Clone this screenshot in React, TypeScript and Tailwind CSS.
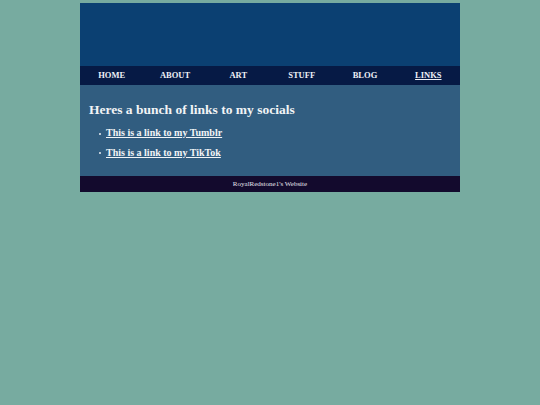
export default function App() {
  const nav = ["HOME", "ABOUT", "ART", "STUFF", "BLOG", "LINKS"];
  const links = ["This is a link to my Tumblr", "This is a link to my TikTok"];
  return (
    <div className="min-h-[405px] w-full bg-[#77aba0] pt-[3px]" style={{ fontFamily: '"Liberation Serif", "Times New Roman", serif' }}>
      <div className="mx-auto w-[380px]">
        <div className="h-[63px] bg-[#0b4072]" />
        <div className="grid h-[19px] grid-cols-6 items-center bg-[#061a45] text-[8.5px] font-bold text-[#eef0f6]">
          {nav.map((n) => (
            <div key={n} className={"text-center leading-none " + (n === "LINKS" ? "underline" : "")}>
              {n}
            </div>
          ))}
        </div>
        <div className="h-[91px] bg-[#315d80] px-[9px] pt-[17px] text-[#f2f4f6]">
          <h1 className="text-[13.5px] font-bold leading-[16px]">Heres a bunch of links to my socials</h1>
          <ul className="mt-[5px] pl-[10px]">
            {links.map((l, i) => (
              <li key={l} className={"flex items-center text-[10px] font-bold " + (i === 0 ? "h-[19px]" : "h-[20px]")}>
                <span className="mr-[5px] h-[2px] w-[2px] translate-y-[1px] rounded-full bg-[#e8ecf2]" />
                <a className="underline">{l}</a>
              </li>
            ))}
          </ul>
        </div>
        <div className="flex h-[16px] items-center justify-center bg-[#130a2d] text-[7px] text-[#e8e6ee]">
          RoyalRedstone1's Website
        </div>
      </div>
    </div>
  );
}
